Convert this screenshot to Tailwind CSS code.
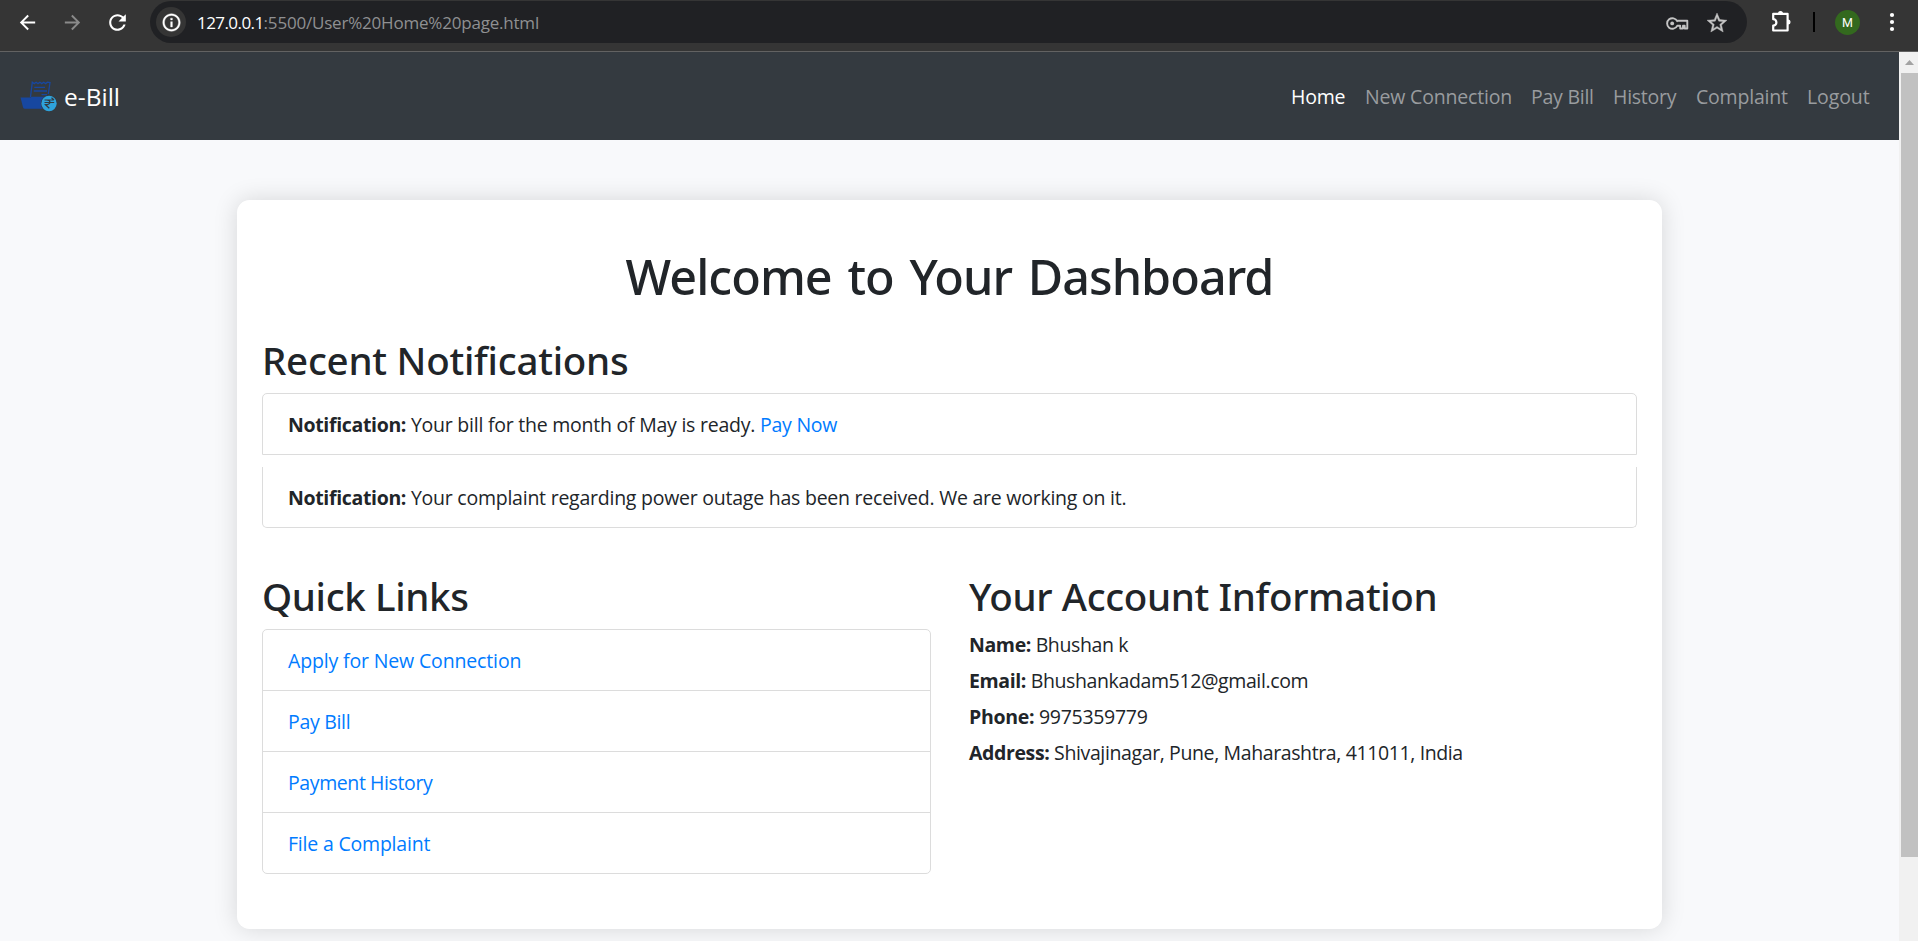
<!DOCTYPE html>
<html lang="en">
<head>
<meta charset="utf-8">
<title>e-Bill</title>
<script src="https://cdn.jsdelivr.net/npm/@tailwindcss/browser@4"></script>
</head>
<body class="h-[941px] w-[1918px] overflow-hidden flex flex-col bg-[#f8f9fb] text-[#212529] font-['Open_Sans','Noto_Sans',sans-serif] text-[19.5px] leading-[30px]">

<!-- Browser toolbar -->
<header class="h-[52px] shrink-0 bg-[#353535] border-b border-[#626262] flex items-start">
  <div class="flex items-center h-[44px] pl-[16px] w-[150px] shrink-0">
    <svg class="size-[23px]" viewBox="0 0 24 24" fill="#fff"><path d="M20 11H7.83l5.59-5.59L12 4l-8 8 8 8 1.41-1.41L7.83 13H20v-2z"/></svg>
    <svg class="size-[23px] ml-[22px]" viewBox="0 0 24 24" fill="#8a8a8a"><path d="M12 4l-1.41 1.41L16.17 11H4v2h12.17l-5.58 5.59L12 20l8-8z"/></svg>
    <svg class="size-[25px] ml-[21px]" viewBox="0 0 24 24" fill="#fff"><path d="M17.65 6.35C16.2 4.9 14.21 4 12 4c-4.42 0-7.99 3.58-7.99 8s3.57 8 7.99 8c3.73 0 6.84-2.55 7.73-6h-2.08c-.82 2.33-3.04 4-5.65 4-3.31 0-6-2.69-6-6s2.69-6 6-6c1.66 0 3.14.69 4.22 1.78L13 11h7V4l-2.35 2.35z"/></svg>
  </div>
  <div class="mt-px h-[42px] w-[1597px] shrink-0 rounded-full bg-[#202124] flex items-center pl-[6px] pr-[18px]">
    <div class="size-[30px] rounded-full bg-[#353535] flex items-center justify-center">
      <svg class="size-[21px]" viewBox="0 0 24 24" fill="#fff" stroke="#fff" stroke-width="0.4"><path d="M11 7h2v2h-2zm0 4h2v6h-2zm1-9C6.48 2 2 6.48 2 12s4.48 10 10 10 10-4.48 10-10S17.52 2 12 2zm0 18c-4.41 0-8-3.59-8-8s3.59-8 8-8 8 3.59 8 8-3.59 8-8 8z"/></svg>
    </div>
    <div class="ml-[11px] pt-px text-[17px] leading-[24px] whitespace-nowrap text-[#8f9092] tracking-[-0.2px]"><span class="text-white tracking-[-0.57px]">127.0.0.1</span>:5500/User%20Home%20page.html</div>
    <svg class="ml-auto mt-px w-[24px] h-[24px]" viewBox="0 0 24 24" fill="none" stroke="#c4c4c4" stroke-width="1.9"><path d="M12.2 10.2A5.3 5.3 0 1 0 12.2 14.8H15.2V17.5H18V14.8H19.7V17.5H22.3V9.7H12z" stroke-linejoin="round"/><circle cx="7.2" cy="12.4" r="1.9" fill="#c4c4c4" stroke="none"/></svg>
    <svg class="ml-[16px] mt-px size-[24px]" viewBox="0 0 24 24" fill="#c4c4c4" stroke="#c4c4c4" stroke-width="0.4"><path d="M22 9.24l-7.19-.62L12 2 9.19 8.63 2 9.24l5.46 4.73L5.82 21 12 17.27 18.18 21l-1.63-7.03L22 9.24zM12 15.4l-3.76 2.27 1-4.28-3.32-2.88 4.38-.38L12 6.1l1.71 4.04 4.38.38-3.32 2.88 1 4.28L12 15.4z"/></svg>
  </div>
  <div class="flex items-center h-[44px] pl-[22px]">
    <svg class="w-[24px] h-[24px]" viewBox="0 0 24 24" fill="none" stroke="#fff" stroke-width="2.2" stroke-linejoin="round"><path d="M4.2 3.8H18.600V20.500H4.200V15.600A3.200 3.200 0 0 0 4.200 9.200z"/><path d="M9.600 3.400a1.900 1.900 0 0 1 3.800 0zM19 10.200a1.900 1.900 0 0 1 0 3.800z" fill="#fff" stroke-width="1.200"/></svg>
    <div class="ml-[20px] w-[2px] h-[20px] bg-black"></div>
    <div class="ml-[20px] size-[25px] rounded-full bg-[#33691e] text-white text-[12.500px] leading-[25px] text-center font-[Roboto,sans-serif]">M</div>
    <svg class="ml-[27px] w-[10px] h-[20px]" viewBox="0 0 10 20" fill="#fff"><circle cx="5" cy="3" r="2.100"/><circle cx="5" cy="10" r="2.100"/><circle cx="5" cy="17" r="2.100"/></svg>
  </div>
</header>

<div class="flex flex-1 min-h-0">
  <div class="w-[1899px] shrink-0 overflow-hidden">

    <nav class="h-[88px] bg-[#343a40] flex items-center pl-[20px] pr-[29px]">
      <a class="flex items-center text-white text-[24.500px] leading-[38px]">
        <svg class="w-[38px] h-[32px] mr-[6px] -mt-px" viewBox="0 0 38 32" fill="none">
          <path d="M10.500 17L12.300 2.200L14.200 3.600L16.100 2.200L18 3.600L19.900 2.200L21.800 3.600L23.700 2.200L25.600 3.600L27.500 2.200L30 2.600L28.300 14" stroke="#1747a0" stroke-width="1.300"/>
          <path d="M14.300 7.400H25M13.800 11H27M21.500 14.600H27" stroke="#1747a0" stroke-width="1.400"/>
          <path d="M0.500 17.600H10.500L11.500 16.800H25V28.700H5Q3.500 28.700 3 27.200z" fill="#1747a0"/>
          <circle cx="29" cy="23.500" r="8.300" fill="#343a40"/>
          <circle cx="29" cy="23.500" r="7.700" fill="#2ea3dc"/>
          <path d="M24.500 20H33.500M24.500 22.500H34.200M31.500 17.800L34 20M26.500 20Q30 20 30 22.300Q29.500 24.600 25.500 24.700L29.300 28.300" stroke="#343a40" stroke-width="1.200"/>
        </svg>
        <span class="pt-px">e-Bill</span>
      </a>
      <div class="ml-auto pt-[2px] flex gap-[20px] text-[#999c9f] whitespace-nowrap">
        <a class="w-[54px] text-white tracking-[-0.2px]">Home</a>
        <a class="w-[146px] tracking-[-0.18px]">New Connection</a>
        <a class="w-[62px] tracking-[-0.25px]">Pay Bill</a>
        <a class="w-[63px] tracking-[-0.25px]">History</a>
        <a class="w-[91px] tracking-[-0.2px]">Complaint</a>
        <a class="w-[63px] tracking-[-0.1px]">Logout</a>
      </div>
    </nav>

    <main class="mt-[60px] mx-[237px] h-[729px] rounded-[12.500px] bg-white shadow-[0_0_25px_rgba(0,0,0,0.14)] px-[25px] pt-[46px]">
      <h1 class="text-center font-['Noto_Sans'] font-medium text-[48.500px] leading-[60px] tracking-[-0.95px] [word-spacing:4px]">Welcome to Your Dashboard</h1>

      <h2 class="mt-[30px] font-['Noto_Sans'] font-medium text-[38.500px] leading-[48px] tracking-[-0.25px]">Recent Notifications</h2>
      <ul class="mt-[9px] tracking-[-0.24px]">
        <li class="h-[62px] border border-[#dcdcdc] rounded-t-[5px] px-[25px] pt-[16px]"><b class="font-bold tracking-[-0.34px]">Notification:</b> Your bill for the month of May is ready. <a class="text-[#007bff]">Pay Now</a></li>
        <li class="mt-[12px] h-[61px] border border-t-0 border-[#dcdcdc] rounded-b-[5px] px-[25px] pt-[16px]"><b class="font-bold tracking-[-0.34px]">Notification:</b> Your complaint regarding power outage has been received. We are working on it.</li>
      </ul>

      <div class="mt-[44px] flex gap-[38px]">
        <section class="w-[669px]">
          <h2 class="font-['Noto_Sans'] font-medium text-[38.500px] leading-[48px] tracking-[-0.35px]">Quick Links</h2>
          <ul class="mt-[9px] border border-[#dcdcdc] rounded-[5px] divide-y divide-[#dcdcdc] text-[#007bff]">
            <li class="h-[61px] px-[25px] pt-[16px] tracking-[-0.15px]">Apply for New Connection</li>
            <li class="h-[61px] px-[25px] pt-[16px] tracking-[-0.3px]">Pay Bill</li>
            <li class="h-[61px] px-[25px] pt-[16px] tracking-[-0.4px]">Payment History</li>
            <li class="h-[60px] px-[25px] pt-[16px] tracking-[-0.2px]">File a Complaint</li>
          </ul>
        </section>
        <section class="flex-1 whitespace-nowrap">
          <h2 class="font-['Noto_Sans'] font-medium text-[38.500px] leading-[48px] tracking-[-0.35px]">Your Account Information</h2>
          <div class="mt-[10px] flex flex-col gap-[6px] tracking-[-0.38px]">
            <p><b class="font-bold">Name:</b> Bhushan k</p>
            <p><b class="font-bold">Email:</b> Bhushankadam512@gmail.com</p>
            <p class="tracking-[-0.3px]"><b class="font-bold">Phone:</b> 9975359779</p>
            <p><b class="font-bold">Address:</b> Shivajinagar, Pune, Maharashtra, 411011, India</p>
          </div>
        </section>
      </div>
    </main>
  </div>

  <!-- Scrollbar -->
  <div class="flex-1 bg-[#f1f1f1] pl-[2px]">
    <div class="h-[21px] flex items-center justify-center"><svg class="w-[9px] h-[5px]" viewBox="0 0 9 5"><path d="M4.500 0L9 5H0z" fill="#a3a3a3"/></svg></div>
    <div class="h-[784px] bg-[#c1c1c1]"></div>
  </div>
</div>
</body>
</html>
